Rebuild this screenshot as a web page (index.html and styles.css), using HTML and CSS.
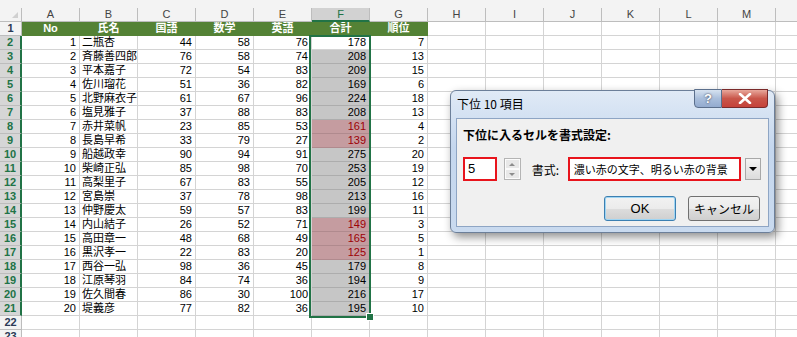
FILE: index.html
```html
<!DOCTYPE html>
<html lang="ja">
<head>
    <meta charset="UTF-8">
    <title>下位 10 項目</title>
    <link rel="stylesheet" href="styles.css">
</head>
<body>
    <div class="sheet">
        <div class="ribbon-edge"></div>
        <div class="grid" id="grid"></div>
        <div class="selection"><span class="fill-handle"></span></div>

        <div class="dialog">
            <div class="title-bar">
                <span class="title">下位 10 項目</span>
                <div class="caption-buttons">
                    <span class="cap-help">?</span>
                    <span class="cap-close">
                        <svg width="14" height="11" viewBox="0 0 14 11"><path d="M2 1 L12 10 M12 1 L2 10" stroke="#fff" stroke-width="2.6" stroke-linecap="round"/></svg>
                    </span>
                </div>
            </div>
            <div class="client">
                <p class="prompt">下位に入るセルを書式設定:</p>
                <div class="field-row">
                    <div class="count-box">5</div>
                    <div class="spinner">
                        <span class="spin up"></span>
                        <span class="spin down"></span>
                    </div>
                    <span class="field-label">書式:</span>
                    <div class="format-box">濃い赤の文字、明るい赤の背景</div>
                    <div class="drop-btn"></div>
                </div>
                <div class="button-row">
                    <span class="btn default">OK</span>
                    <span class="btn">キャンセル</span>
                </div>
            </div>
        </div>
    </div>

    <script>
        const letters = ["A", "B", "C", "D", "E", "F", "G", "H", "I", "J", "K", "L", "M", ""];
        const headings = ["No", "氏名", "国語", "数学", "英語", "合計", "順位"];
        const students = [
            [1, "二瓶杏", 44, 58, 76, 178, 7],
            [2, "斉藤善四郎", 76, 58, 74, 208, 13],
            [3, "平本嘉子", 72, 54, 83, 209, 15],
            [4, "佐川瑠花", 51, 36, 82, 169, 6],
            [5, "北野麻衣子", 61, 67, 96, 224, 18],
            [6, "塩見雅子", 37, 88, 83, 208, 13],
            [7, "赤井菜帆", 23, 85, 53, 161, 4],
            [8, "長島早希", 33, 79, 27, 139, 2],
            [9, "船越政幸", 90, 94, 91, 275, 20],
            [10, "柴崎正弘", 85, 98, 70, 253, 19],
            [11, "高梨里子", 67, 83, 55, 205, 12],
            [12, "宮島崇", 37, 78, 98, 213, 16],
            [13, "仲野慶太", 59, 57, 83, 199, 11],
            [14, "内山結子", 26, 52, 71, 149, 3],
            [15, "高田章一", 48, 68, 49, 165, 5],
            [16, "黒沢孝一", 22, 83, 20, 125, 1],
            [17, "西谷一弘", 98, 36, 45, 179, 8],
            [18, "江原琴羽", 84, 74, 36, 194, 9],
            [19, "佐久間春", 86, 30, 100, 216, 17],
            [20, "堤義彦", 77, 82, 36, 195, 10]
        ];

        const grid = document.getElementById("grid");

        function addCell(text, className) {
            const cell = document.createElement("div");
            cell.className = "cell " + (className || "");
            cell.textContent = text;
            grid.appendChild(cell);
            return cell;
        }

        // column header row
        addCell("", "corner");
        letters.forEach(l => addCell(l, "col-head" + (l === "F" ? " active" : "")));

        // row 1: table headings
        addCell("1", "row-head");
        letters.forEach((l, i) => {
            if (i < headings.length) addCell(headings[i], "heading");
            else addCell("");
        });

        // rows 2..21
        students.forEach((s, r) => {
            addCell(String(r + 2), "row-head active");
            letters.forEach((l, i) => {
                if (i >= s.length) { addCell(""); return; }
                let cls = i === 1 ? "txt" : "num";
                if (i === 5) {
                    if (s[6] <= 5) cls += " low";
                    else if (r > 0) cls += " picked";
                }
                addCell(s[i], cls);
            });
        });

        // empty rows 22, 23
        for (let r = 22; r <= 23; r++) {
            addCell(String(r), "row-head");
            letters.forEach(() => addCell(""));
        }
    </script>
</body>
</html>
```

FILE: styles.css
```css
body {
    margin: 0;
    background-color: white;
    overflow: hidden;
    font-family: "Liberation Sans", "Noto Sans CJK JP", sans-serif;
}

.sheet {
    position: relative;
    width: 797px;
    height: 337px;
    overflow: hidden;
}

.ribbon-edge {
    height: 8px;
    background-color: #f3f3f3;
}

/* spreadsheet grid */
.grid {
    display: grid;
    grid-template-columns: 22px repeat(14, 58px);
    grid-auto-rows: 14px;
    width: 834px;
}

.cell {
    box-sizing: border-box;
    border-right: 1px solid #d4d4d4;
    border-bottom: 1px solid #d4d4d4;
    font-size: 11px;
    line-height: 13px;
    color: black;
    white-space: nowrap;
    overflow: hidden;
}

.corner {
    background-color: #f3f3f3;
    border-color: #bdbdbd;
    position: relative;
}

.corner::after {
    content: "";
    position: absolute;
    right: 3px;
    bottom: 3px;
    border-left: 6px solid transparent;
    border-bottom: 6px solid #d0d0d0;
}

.col-head {
    background-color: #f3f3f3;
    border-color: #bdbdbd;
    text-align: center;
    color: #444;
}

.col-head.active {
    background-color: #d2d2d2;
    color: #217346;
    border-bottom: 2px solid #217346;
}

.row-head {
    background-color: #f3f3f3;
    border-color: #bdbdbd;
    text-align: center;
    font-weight: bold;
    font-size: 11px;
    color: #2b3a55;
}

.row-head.active {
    background-color: #d6d6d6;
    color: #217346;
    border-right: 2px solid #217346;
}

.heading {
    background-color: #548235;
    border-color: #548235;
    color: white;
    font-weight: bold;
    text-align: center;
    font-size: 11px;
}

.num {
    text-align: right;
    padding-right: 3px;
}

.txt {
    padding-left: 2px;
}

.picked {
    background-color: #c6c6c6;
    border-bottom-color: #adadad;
}

.low {
    background-color: #c59ca0;
    border-bottom-color: #b08a8e;
    color: #9c0006;
}

.selection {
    position: absolute;
    left: 309px;
    top: 35px;
    width: 58px;
    height: 279px;
    border: 2px solid #217346;
}

.fill-handle {
    position: absolute;
    right: -5px;
    bottom: -5px;
    width: 6px;
    height: 6px;
    background-color: #217346;
    border: 1px solid white;
}

/* dialog */
.dialog {
    position: absolute;
    left: 450px;
    top: 90px;
    width: 325px;
    height: 143px;
    box-sizing: border-box;
    border: 1px solid #6c7f99;
    border-radius: 6px;
    background: linear-gradient(#e0eaf6, #c5d7ee 40%, #c9daef);
    box-shadow: 3px 4px 10px rgba(0, 0, 0, 0.45);
    font-family: "Noto Sans CJK JP", sans-serif;
    padding: 0 5px 5px 5px;
}

.title-bar {
    position: relative;
    height: 27px;
}

.title {
    display: block;
    padding: 4px 0 0 1px;
    font-size: 12px;
    line-height: 18px;
    color: black;
}

.caption-buttons {
    position: absolute;
    top: -2px;
    right: 1px;
    display: flex;
}

.cap-help,
.cap-close {
    display: flex;
    align-items: center;
    justify-content: center;
    height: 19px;
    box-sizing: border-box;
    border: 1px solid #5b6f8c;
    border-radius: 0 0 0 4px;
}

.cap-help {
    width: 28px;
    background: linear-gradient(#d6e2f0, #a9bedb 50%, #93abcf);
    color: white;
    font-family: "Liberation Sans", sans-serif;
    font-weight: bold;
    font-size: 13px;
    text-shadow: 0 0 2px #223;
}

.cap-close {
    width: 46px;
    border-radius: 0 0 4px 0;
    border-left: none;
    border-color: #7a2a2a;
    background: linear-gradient(#e8a89c, #c9564a 50%, #c5423a);
}

.client {
    box-sizing: border-box;
    height: 109px;
    background-color: #f0f0f0;
    border: 1px solid #8ea5c4;
    padding: 7px 7px 0 6px;
}

.prompt {
    margin: 0;
    font-size: 12px;
    line-height: 18px;
    font-weight: bold;
}

.field-row {
    display: flex;
    align-items: center;
    margin-top: 13px;
    height: 24px;
}

.count-box {
    box-sizing: border-box;
    width: 34px;
    height: 24px;
    border: 2px solid #e8141c;
    background-color: white;
    font-size: 13px;
    line-height: 20px;
    padding-left: 3px;
    font-family: "Liberation Sans", sans-serif;
}

.spinner {
    display: flex;
    flex-direction: column;
    margin-left: 7px;
    width: 17px;
    height: 22px;
    box-sizing: border-box;
    border: 1px solid #b4b4b4;
    background-color: #e8e8e8;
}

.spin {
    flex: 1;
    display: flex;
    align-items: center;
    justify-content: center;
    border: 1px solid #fbfbfb;
}

.spin::after {
    content: "";
    border-left: 3px solid transparent;
    border-right: 3px solid transparent;
}

.spin.up::after {
    border-bottom: 3px solid #8c8c8c;
}

.spin.down::after {
    border-top: 3px solid #8c8c8c;
}

.field-label {
    margin-left: 11px;
    font-size: 12px;
    width: 36px;
}

.format-box {
    box-sizing: border-box;
    width: 174px;
    height: 24px;
    border: 2px solid #e8141c;
    background-color: white;
    font-size: 11px;
    line-height: 20px;
    padding-left: 4px;
    white-space: nowrap;
}

.drop-btn {
    box-sizing: border-box;
    margin-left: 4px;
    width: 16px;
    height: 22px;
    border: 1px solid #a8a8a8;
    background: linear-gradient(#f4f4f4, #dcdcdc);
    display: flex;
    align-items: center;
    justify-content: center;
}

.drop-btn::after {
    content: "";
    border-left: 4px solid transparent;
    border-right: 4px solid transparent;
    border-top: 4px solid black;
}

.button-row {
    display: flex;
    justify-content: flex-end;
    gap: 12px;
    margin-top: 15px;
    padding-right: 1px;
}

.btn {
    box-sizing: border-box;
    width: 72px;
    height: 25px;
    border: 1px solid #707070;
    border-radius: 3px;
    background: linear-gradient(#f2f2f2, #ebebeb 50%, #dddddd 51%, #cfcfcf);
    font-size: 12px;
    line-height: 23px;
    text-align: center;
}

.btn.default {
    border-color: #3c7fb1;
    box-shadow: inset 0 0 0 1px #9fd5f3;
    font-family: "Liberation Sans", sans-serif;
    font-size: 13px;
}
```
